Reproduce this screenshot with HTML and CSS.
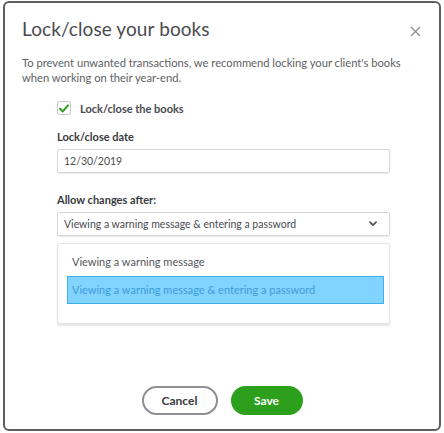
FILE: index.html
```html
<!DOCTYPE html>
<html>
<head>
<meta charset="utf-8">
<link rel="stylesheet" href="styles.css">
</head>
<body>
<div class="dialog">
  <div class="header">
    <h1 class="title">Lock/close your books</h1>
    <button class="close" aria-label="Close">
      <svg width="11" height="11" viewBox="0 0 11 11"><path d="M1 1L10 10M10 1L1 10" stroke="#8d9096" stroke-width="1.4" fill="none"/></svg>
    </button>
  </div>
  <p class="desc">To prevent unwanted transactions, we recommend locking your client's books when working on their year-end.</p>
  <div class="form">
    <label class="check-row">
      <span class="checkbox">
        <svg width="10" height="9" viewBox="0 0 10 9"><path d="M1 4.8L3.8 7.4L9 1.4" stroke="#2ca01c" stroke-width="2" fill="none" stroke-linecap="round" stroke-linejoin="round"/></svg>
      </span>
      <span class="check-label">Lock/close the books</span>
    </label>
    <div class="field">
      <div class="field-label">Lock/close date</div>
      <div class="input">12/30/2019</div>
    </div>
    <div class="field">
      <div class="field-label">Allow changes after:</div>
      <div class="input select">
        <span>Viewing a warning message &amp; entering a password</span>
        <svg class="chev" width="8" height="6" viewBox="0 0 8 6"><path d="M1 1.2L4 4.2L7 1.2" stroke="#555" stroke-width="1.8" fill="none" stroke-linecap="round" stroke-linejoin="round"/></svg>
      </div>
      <div class="menu">
        <div class="option">Viewing a warning message</div>
        <div class="option selected">Viewing a warning message &amp; entering a password</div>
      </div>
    </div>
  </div>
  <div class="footer">
    <button class="btn cancel">Cancel</button>
    <button class="btn save">Save</button>
  </div>
</div>
</body>
</html>
```
FILE: styles.css
```css
html, body {
  margin: 0;
  padding: 0;
  background: #ffffff;
}
body {
  font-family: Lato, "Open Sans", sans-serif;
  color: #393a3d;
}
.dialog {
  box-sizing: border-box;
  margin: 1px 3px 0 3px;
  width: 438px;
  height: 430px;
  border: 2px solid #5e5e5e;
  border-radius: 6px;
  background: #fff;
  display: flex;
  flex-direction: column;
  padding: 0 0 0 17px;
}
.header {
  display: flex;
  justify-content: space-between;
  align-items: flex-start;
  padding-top: 15px;
}
.title {
  margin: 0;
  font-size: 19px;
  line-height: 22px;
  font-weight: 400;
  color: #4a4b4f;
  letter-spacing: 0.1px;
}
.close {
  border: 0;
  background: none;
  padding: 0;
  margin: 8px 18px 0 0;
  width: 11px;
  height: 11px;
  display: flex;
}
.desc {
  margin: 15px 0 0 0;
  width: 380px;
  font-size: 11.2px;
  line-height: 15px;
  color: #606165;
}
.form {
  margin-left: 35px;
  width: 333px;
  display: flex;
  flex-direction: column;
}
.check-row {
  display: flex;
  align-items: center;
  margin-top: 16px;
  height: 14px;
}
.checkbox {
  box-sizing: border-box;
  width: 14px;
  height: 14px;
  border: 1px solid #c9cacc;
  border-radius: 2px;
  display: flex;
  align-items: center;
  justify-content: center;
  background: #fff;
}
.check-label {
  margin-left: 9px;
  font-size: 11px;
  font-weight: 700;
  color: #4a4b4f;
}
.field {
  display: flex;
  flex-direction: column;
  margin-top: 15px;
}
.field + .field {
  margin-top: 20px;
}
.field-label {
  font-size: 11px;
  line-height: 14px;
  font-weight: 700;
  color: #393a3d;
  margin-bottom: 5px;
}
.input {
  box-sizing: border-box;
  height: 24px;
  border: 1px solid #d4d7dc;
  border-radius: 2px;
  box-shadow: 0 1px 1px rgba(0,0,0,0.08);
  display: flex;
  align-items: center;
  padding-left: 6px;
  font-size: 10.5px;
  color: #4a4b4f;
}
.select {
  justify-content: space-between;
  padding-right: 12px;
}
.chev {
  display: block;
}
.menu {
  box-sizing: border-box;
  margin-top: 7px;
  height: 81px;
  border: 1px solid #e3e5e8;
  border-radius: 2px;
  box-shadow: 0 2px 2px rgba(0,0,0,0.10);
  padding: 10px 6px 0 9px;
}
.option {
  font-size: 11px;
  line-height: 16px;
  color: #55565a;
  padding-left: 5px;
}
.option.selected {
  box-sizing: border-box;
  margin-top: 6px;
  padding-left: 4px;
  width: 317px;
  height: 28px;
  line-height: 26px;
  background: #80d4ff;
  border: 1px solid #3eaee8;
  color: #3f9bd8;
}
.footer {
  margin-top: auto;
  margin-bottom: 14px;
  margin-left: -17px;
  display: flex;
  justify-content: center;
  gap: 13px;
}
.btn {
  box-sizing: border-box;
  height: 29px;
  border-radius: 15px;
  font-family: Lato, "Open Sans", sans-serif;
  font-size: 12px;
  font-weight: 700;
  padding: 0;
}
.cancel {
  width: 76px;
  background: #fff;
  border: 2px solid #8d9096;
  color: #393a3d;
}
.save {
  width: 72px;
  background: #2ca01c;
  border: 0;
  color: #fff;
}
```
